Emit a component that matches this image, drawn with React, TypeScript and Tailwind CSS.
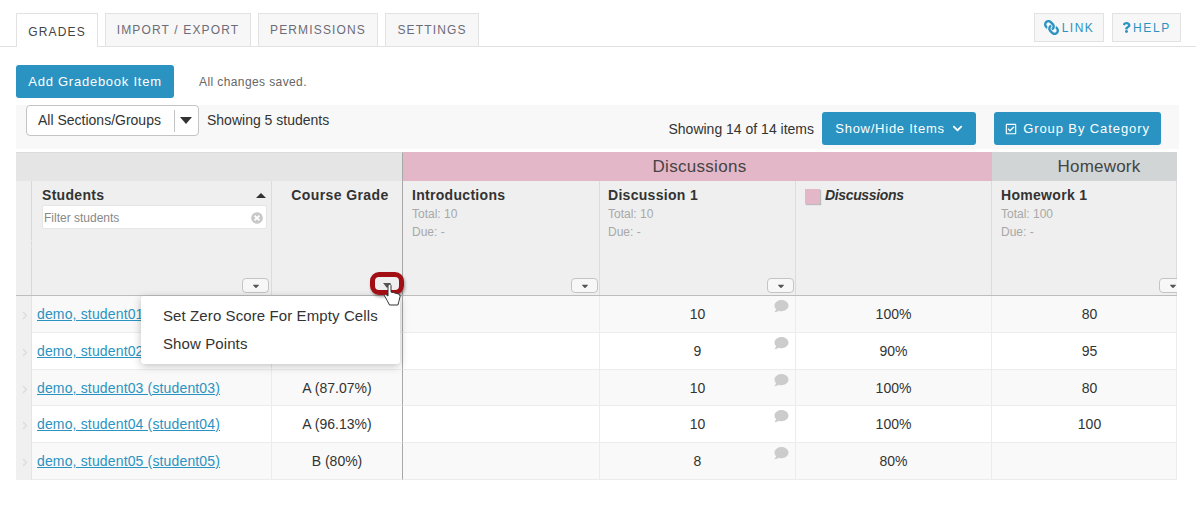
import React from "react";
import {
  FaCaretDown,
  FaChevronDown,
  FaChevronRight,
  FaComment,
  FaLink,
  FaQuestion,
  FaRegCheckSquare,
  FaTimesCircle,
} from "react-icons/fa";

const tabs = [
  { name: "IMPORT / EXPORT", width: "w-[146px]" },
  { name: "PERMISSIONS", width: "w-[120px]" },
  { name: "SETTINGS", width: "w-[94px]" },
];

// the first two rows sit partly under the open menu, row 3 is a pixel shorter
const students = [
  { name: "demo, student01", grade: "", d1: "10", cat: "100%", hw: "80", shade: true, height: "h-[37px]" },
  { name: "demo, student02", grade: "", d1: "9", cat: "90%", hw: "95", shade: false, height: "h-[37px]" },
  { name: "demo, student03 (student03)", grade: "A (87.07%)", d1: "10", cat: "100%", hw: "80", shade: true, height: "h-[36px]" },
  { name: "demo, student04 (student04)", grade: "A (96.13%)", d1: "10", cat: "100%", hw: "100", shade: false, height: "h-[37px]" },
  { name: "demo, student05 (student05)", grade: "B (80%)", d1: "8", cat: "80%", hw: "", shade: true, height: "h-[37px]" },
];

const columns = "grid grid-cols-[16px_240px_131px_197px_196px_196px_185px]";

const MenuToggle = ({ className = "" }: { className?: string }) => (
  <span
    className={`flex h-[15px] w-[27px] items-center justify-center rounded-[4px] border border-[#c4c4c4] bg-[#f7f7f7] text-[10px] text-[#555] ${className}`}
  >
    <FaCaretDown />
  </span>
);

const ItemHeader = ({
  title,
  total,
  padding = "pl-[9px]",
  toggle = "right-[1px]",
}: {
  title: string;
  total: string;
  padding?: string;
  toggle?: string;
}) => (
  <div className={`relative flex h-[114px] flex-col border-r border-[#dcdcdc] bg-[#efefef] pt-[6px] ${padding}`}>
    <div className="text-[14px] leading-[16px] font-bold tracking-[0.3px] text-[#333]">{title}</div>
    <div className="mt-[2px] text-[12px] leading-[18px] text-[#a8a8a8]">Total: {total}</div>
    <div className="text-[12px] leading-[18px] text-[#a8a8a8]">Due: -</div>
    <MenuToggle className={`absolute bottom-[2px] ${toggle}`} />
  </div>
);

const Cell = ({
  children,
  shade,
  comment,
  className = "",
}: {
  children?: React.ReactNode;
  shade: boolean;
  comment?: boolean;
  className?: string;
}) => (
  <div
    className={`relative flex items-center justify-center border-r border-b border-[#ececec] pt-[1px] text-[14px] text-[#333] ${shade ? "bg-[#f9f9f9]" : "bg-white"} ${className}`}
  >
    {children}
    {comment && <FaComment className="absolute top-[3px] right-[6px] h-[14px] w-[15px] text-[#cccccc]" />}
  </div>
);

export default function App() {
  return (
    <div className="h-[508px] w-[1196px] overflow-hidden bg-white font-['Liberation_Sans',Arial,sans-serif]">
      <div className="flex h-[47px] items-end gap-[7px] border-b border-[#e2e2e2] pl-[16px] pr-[15px]">
        <div className="mb-[-1px] flex h-[34px] w-[82px] items-center justify-center border border-b-0 border-[#e2e2e2] bg-white pt-[2px] text-[12px] tracking-[1.15px] text-[#444]">
          GRADES
        </div>
        {tabs.map((tab) => (
          <div
            key={tab.name}
            className={`flex h-[33px] items-center justify-center border border-b-0 border-[#e2e2e2] bg-[#f7f7f7] text-[12px] tracking-[1.15px] text-[#6c6c78] ${tab.width}`}
          >
            {tab.name}
          </div>
        ))}
        <div className="mb-[4px] ml-auto flex gap-[8px]">
          <div className="flex h-[29px] w-[70px] items-center justify-center gap-[3px] border border-[#e2e2e2] bg-[#f7f7f7] text-[12px] tracking-[1.5px] text-[#2a93c1]">
            <FaLink className="h-[15px] w-[15px] -scale-x-100" />
            LINK
          </div>
          <div className="flex h-[29px] w-[69px] items-center justify-center gap-[2px] border border-[#e2e2e2] bg-[#f7f7f7] text-[12px] tracking-[1.7px] text-[#2a93c1]">
            <FaQuestion className="h-[11px] w-[9px]" />
            HELP
          </div>
        </div>
      </div>

      <div className="flex items-center gap-[25px] pl-[16px] pt-[18px]">
        <div className="flex h-[33px] w-[158px] items-center justify-center rounded-[3px] bg-[#2a93c1] text-[13px] tracking-[0.75px] text-white">
          Add Gradebook Item
        </div>
        <div className="text-[12px] tracking-[0.4px] text-[#666]">All changes saved.</div>
      </div>

      <div className="mb-[3px] ml-[16px] mt-[7px] flex h-[44px] w-[1163px] justify-between bg-[#f8f8f8]">
        <div className="flex items-start">
          <div className="ml-[10px] flex h-[31px] w-[173px] items-center rounded-[4px] border border-[#c4c4c4] bg-white pl-[11px] text-[14px] text-[#333]">
            <span className="w-[136px]">All Sections/Groups</span>
            <span className="h-[22px] border-l border-[#c4c4c4]" />
            <span className="ml-[5px] h-0 w-0 border-x-[6px] border-t-[7px] border-x-transparent border-t-[#333]" />
          </div>
          <span className="ml-[8px] mt-[6px] text-[14px] leading-[18px] text-[#333]">Showing 5 students</span>
        </div>
        <div className="flex items-start pt-[7px]">
          <span className="mr-[8px] mt-[8px] text-[14px] leading-[18px] text-[#333]">Showing 14 of 14 items</span>
          <div className="flex h-[33px] w-[154px] items-center justify-center gap-[7px] rounded-[3px] bg-[#2a93c1] text-[13px] tracking-[0.75px] text-white">
            Show/Hide Items
            <FaChevronDown className="h-[11px] w-[11px]" />
          </div>
          <div className="ml-[18px] mr-[18px] flex h-[33px] w-[167px] items-center justify-center gap-[6px] rounded-[3px] bg-[#2a93c1] text-[13px] tracking-[0.9px] text-white">
            <FaRegCheckSquare className="h-[12px] w-[12px]" />
            Group By Category
          </div>
        </div>
      </div>

      <div className="relative ml-[16px] w-[1161px]">
        <div className="w-[1161px] overflow-hidden">
          <div className={columns}>
            <div className="col-span-3 h-[29px] border-t border-r border-[#dcdcdc] border-r-[#a8a8a8] bg-[#e5e5e5]" />
            <div className="col-span-3 flex h-[29px] items-center justify-center bg-[#e4b7c8] pl-[4px] text-[17px] tracking-[0.3px] text-[#444]">
              Discussions
            </div>
            <div className="flex h-[29px] items-center justify-center bg-[#d1d5d5] pl-[29px] text-[17px] tracking-[0.2px] text-[#444]">
              Homework
            </div>
          </div>
          <div className={`${columns} border-b border-[#bdbdbd]`}>
            <div className="relative h-[114px] border-r border-[#d8d8d8] bg-[#efefef]">
              <FaChevronRight className="absolute top-[58px] left-[14px] h-[9px] w-[6px] text-[#e4e4e4]" />
            </div>
            <div className="relative h-[114px] border-r border-[#dcdcdc] bg-[#efefef] pl-[10px] pr-[4px] pt-[6px]">
              <div className="flex items-center justify-between pr-[1px] text-[14px] leading-[16px] font-bold tracking-[0.3px] text-[#333]">
                Students
                <span className="h-0 w-0 border-x-[5px] border-b-[5px] border-x-transparent border-b-[#333]" />
              </div>
              <div className="mt-[2px] flex h-[24px] items-center justify-between rounded-[2px] border border-[#e6e6e6] bg-white pl-[1px] pr-[3px] pt-[1px] text-[12px] text-[#888]">
                Filter students
                <FaTimesCircle className="h-[12px] w-[12px] text-[#c8c8c8]" />
              </div>
              <MenuToggle className="absolute right-[2px] bottom-[2px]" />
            </div>
            <div className="relative h-[114px] border-r border-[#a8a8a8] bg-[#efefef] pl-[6px] pt-[6px] text-center text-[14px] leading-[16px] font-bold tracking-[0.4px] text-[#333]">
              Course Grade
            </div>
            <ItemHeader title="Introductions" total="10" />
            <ItemHeader title="Discussion 1" total="10" padding="pl-[8px]" />
            <div className="flex h-[114px] items-start border-r border-[#dcdcdc] bg-[#efefef] pl-[9px] pt-[6px] text-[14px] leading-[16px] font-bold italic tracking-[-0.35px] text-[#333]">
              <span className="mr-[5px] mt-[2px] h-[15px] w-[15px] bg-[#e4b7c8] shadow-[1px_1px_1px_#bbb]" />
              Discussions
            </div>
            <ItemHeader title="Homework 1" total="100" toggle="left-[167px]" />
          </div>
          {students.map((student) => (
            <div key={student.name} className={`${columns} ${student.height}`}>
              <div className="relative border-r border-[#e4e4e4] bg-[#f0f0f0]">
                <FaChevronRight className="absolute top-[15px] left-[6px] h-[9px] w-[6px] text-[#dcdcdc]" />
              </div>
              <Cell shade={student.shade} className="justify-start pl-[5px]">
                <span className="tracking-[0.15px] text-[#2a93c1] underline">{student.name}</span>
              </Cell>
              <Cell shade={student.shade} className="border-r-[#a8a8a8]">
                {student.grade}
              </Cell>
              <Cell shade={student.shade} />
              <Cell shade={student.shade} comment>
                {student.d1}
              </Cell>
              <Cell shade={student.shade}>{student.cat}</Cell>
              <Cell shade={student.shade} className="pl-[11px]">
                {student.hw}
              </Cell>
            </div>
          ))}
        </div>

        <div className="absolute left-[125px] top-[144px] flex h-[68px] w-[259px] flex-col rounded-[3px] bg-white pl-[22px] pt-[6px] text-[15px] leading-[28px] tracking-[0.1px] text-[#333] shadow-[0_2px_8px_rgba(0,0,0,0.25)]">
          <span>Set Zero Score For Empty Cells</span>
          <span>Show Points</span>
        </div>

        <div className="absolute left-[354px] top-[120px] h-[23px] w-[34px] rounded-[9px] border-[5px] border-[#a10f14] shadow-[1px_2px_3px_rgba(0,0,0,0.35)]">
          <span className="absolute left-[8px] top-[6px] h-0 w-0 border-x-[4px] border-t-[5px] border-x-transparent border-t-[#555]" />
        </div>

        <svg className="absolute left-[367px] top-[131px]" width="22" height="26" viewBox="0 0 22 26">
          <path
            d="M6 1.5c1-.6 2 0 2 1.2v6.4l2.4.5 1 .3 2.6.6 2.5.9.6 2-1.2 5-1 3.6H6.5L4.2 17.5 1.6 13c-.4-1 .6-1.8 1.6-1.2L5 13V2.7c0-.5.4-1 1-1.2Z"
            fill="#fff"
            stroke="#333"
            strokeWidth="1"
          />
        </svg>
      </div>
    </div>
  );
}
